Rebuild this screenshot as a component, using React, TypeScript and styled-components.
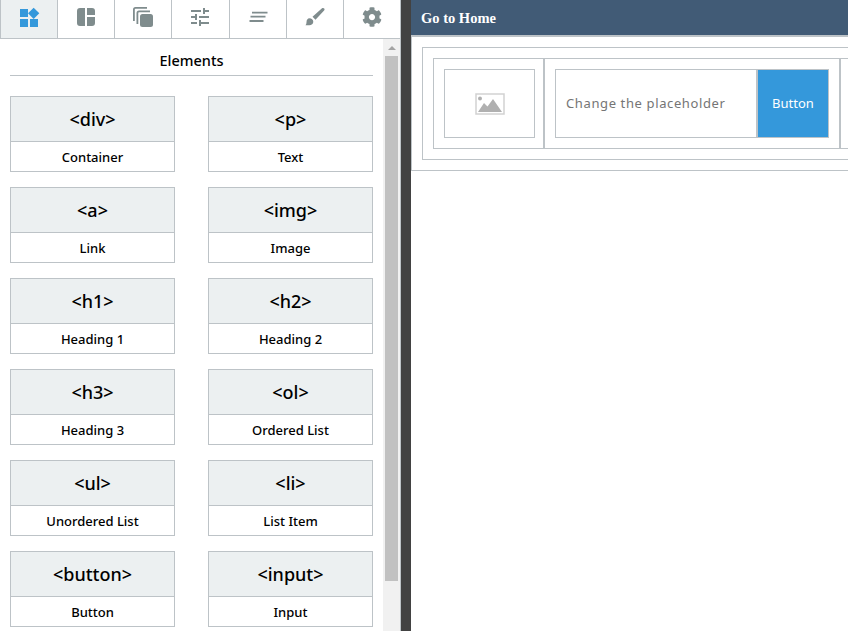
import React from "react";
import styled, { createGlobalStyle } from "styled-components";
import { FaCog } from "react-icons/fa";
import { MdTune, MdWidgets } from "react-icons/md";

const elements = [
  { tag: "<div>", label: "Container" },
  { tag: "<p>", label: "Text" },
  { tag: "<a>", label: "Link" },
  { tag: "<img>", label: "Image" },
  { tag: "<h1>", label: "Heading 1" },
  { tag: "<h2>", label: "Heading 2" },
  { tag: "<h3>", label: "Heading 3" },
  { tag: "<ol>", label: "Ordered List" },
  { tag: "<ul>", label: "Unordered List" },
  { tag: "<li>", label: "List Item" },
  { tag: "<button>", label: "Button" },
  { tag: "<input>", label: "Input" },
];

const WidgetsIcon = styled(MdWidgets)`
  transform: translateY(1px);
`;

const LayoutIcon = () => (
  <svg width="24" height="24" viewBox="0 0 24 24" fill="currentColor">
    <path d="M11 3v18H6a3 3 0 0 1-3-3V6a3 3 0 0 1 3-3h5zM13 3h5a3 3 0 0 1 3 3v4h-8V3zM13 12h8v6a3 3 0 0 1-3 3h-5v-9z" />
  </svg>
);

const LayersIcon = () => (
  <svg width="24" height="24" viewBox="0 0 24 24" fill="currentColor">
    <path d="M2 4.500A2.500 2.500 0 0 1 4.500 2H16v1.800H4.500a.7.7 0 0 0-.7.7V16H2V4.500z" />
    <path d="M5.500 8A2.500 2.500 0 0 1 8 5.500h11v1.800H8a.7.7 0 0 0-.7.7v11H5.500V8z" />
    <rect x="9" y="9" width="13" height="13" rx="2.500" />
  </svg>
);

const LinesIcon = () => (
  <svg width="24" height="24" viewBox="0 0 24 24" fill="currentColor">
    <path d="M6 6.800h15.500v1.800H6zM4.500 10.800h15v1.800h-15zM3.500 15.100h14v1.800h-14z" />
  </svg>
);

const BrushIcon = () => (
  <svg width="24" height="24" viewBox="0 0 24 24" fill="currentColor">
    <path d="M9.500 11.800L19 3.300c.7-.6 1.700-.5 2.200.1.500.6.500 1.500-.1 2.100l-8.600 9.300-3-3z" />
    <path d="M6.500 13.300c2 0 3.800 1.500 3.800 3.400 0 2-1.800 3.500-4 3.500H2.500c.7-.7 1-1.700 1-3 0-2.200 1-3.900 3-3.900z" />
  </svg>
);

const tabs = [
  <WidgetsIcon size={24} />,
  <LayoutIcon />,
  <LayersIcon />,
  <MdTune size={24} />,
  <LinesIcon />,
  <BrushIcon />,
  <FaCog size={20} />,
];

const GlobalStyle = createGlobalStyle`
  html, body {
    margin: 0;
    height: 100%;
    overflow: hidden;
    background: #fff;
  }
  * {
    box-sizing: border-box;
  }
  #root {
    height: 100%;
  }
`;

const Page = styled.div`
  display: flex;
  width: 848px;
  height: 631px;
  overflow: hidden;
  font-family: "Noto Sans", "Open Sans", sans-serif;
`;

const Sidebar = styled.aside`
  display: flex;
  flex-direction: column;
  flex: none;
  width: 401px;
  height: 100%;
`;

const Tabs = styled.nav`
  display: flex;
  flex: none;
  height: 39px;
  border-bottom: 1px solid #bdc3c7;
`;

const Tab = styled.div<{ $active?: boolean }>`
  display: flex;
  flex: 1;
  align-items: center;
  justify-content: center;
  padding-bottom: 4px;
  border-left: ${(p) => (p.$active ? "1px solid #bdc3c7" : "none")};
  border-right: 1px solid #bdc3c7;
  background: ${(p) => (p.$active ? "#ecf0f1" : "#fff")};
  color: ${(p) => (p.$active ? "#3498db" : "#7f8c8d")};
`;

const SidebarBody = styled.div`
  display: flex;
  flex: 1;
  min-height: 0;
  border-right: 1px solid #bdc3c7;
`;

const Elements = styled.div`
  flex: 1;
  padding: 10px 10px 0;
  overflow: hidden;
`;

const Title = styled.h2`
  margin: 0 0 20px;
  height: 27px;
  border-bottom: 1px solid #bdc3c7;
  font-size: 14.500px;
  font-weight: 500;
  line-height: 23px;
  text-align: center;
  color: #000;
`;

const Grid = styled.div`
  display: grid;
  grid-template-columns: 165px 165px;
  justify-content: space-between;
  row-gap: 15px;
`;

const Card = styled.div`
  display: flex;
  flex-direction: column;
  height: 76px;
  border: 1px solid #bdc3c7;
`;

const Tag = styled.div`
  display: flex;
  flex: 1;
  align-items: center;
  justify-content: center;
  border-bottom: 1px solid #bdc3c7;
  background: #ecf0f1;
  font-size: 18px;
  font-weight: 500;
  color: #000;
`;

const Label = styled.div`
  display: flex;
  flex: none;
  align-items: center;
  justify-content: center;
  height: 29px;
  font-size: 13px;
  font-weight: 500;
  color: #000;
`;

const ScrollTrack = styled.div`
  display: flex;
  flex-direction: column;
  align-items: center;
  flex: none;
  width: 17px;
  background: #f1f1f1;
`;

const ScrollArrow = styled.div`
  flex: none;
  width: 0;
  height: 0;
  margin: 7px 0 6px;
  border-left: 4px solid transparent;
  border-right: 4px solid transparent;
  border-bottom: 4px solid #a3a3a3;
`;

const ScrollThumb = styled.div`
  flex: none;
  width: 13px;
  height: 525px;
  background: #c1c1c1;
`;

const Divider = styled.div`
  flex: none;
  width: 10px;
  height: 100%;
  background: #424242;
`;

const Main = styled.main`
  flex: 1;
  min-width: 0;
  display: flex;
  flex-direction: column;
`;

const TopBar = styled.header`
  flex: none;
  height: 37px;
  padding-left: 10px;
  border-bottom: 2px solid #bdc3c7;
  background: #415b76;
  font-family: "Liberation Serif", serif;
  font-size: 14.500px;
  font-weight: 700;
  line-height: 36px;
  color: #fff;
`;

const Canvas = styled.div`
  width: 500px;
  padding: 10px;
  border-left: 1px solid #bdc3c7;
  border-bottom: 1px solid #bdc3c7;
`;

const Section = styled.div`
  padding: 10px;
  border: 1px solid #bdc3c7;
`;

const Row = styled.div`
  display: flex;
  height: 91px;
  border: 1px solid #bdc3c7;
`;

const Column = styled.div<{ $width: number; $paddingRight: number }>`
  display: flex;
  flex: none;
  width: ${(p) => p.$width}px;
  padding: 10px ${(p) => p.$paddingRight}px 10px 10px;
  border-right: 2px solid #bdc3c7;
`;

const ImageBox = styled.div`
  display: flex;
  flex: 1;
  align-items: center;
  justify-content: center;
  border: 1px solid #bdc3c7;
`;

const Input = styled.div`
  display: flex;
  flex: 1;
  align-items: center;
  padding: 0 0 1px 10px;
  border: 1px solid #bdc3c7;
  border-right-width: 2px;
  font-size: 13px;
  letter-spacing: 0.620px;
  color: #757575;
`;

const Button = styled.div`
  display: flex;
  flex: none;
  width: 71px;
  align-items: center;
  justify-content: center;
  padding-bottom: 1px;
  border: 1px solid #bdc3c7;
  border-left: none;
  background: #3498db;
  font-size: 13px;
  color: #fff;
`;

const App = () => (
  <>
    <GlobalStyle />
    <Page>
      <Sidebar>
        <Tabs>
          {tabs.map((icon, i) => (
            <Tab key={i} $active={i === 0}>
              {icon}
            </Tab>
          ))}
        </Tabs>
        <SidebarBody>
          <Elements>
            <Title>Elements</Title>
            <Grid>
              {elements.map((el) => (
                <Card key={el.tag}>
                  <Tag>{el.tag}</Tag>
                  <Label>{el.label}</Label>
                </Card>
              ))}
            </Grid>
          </Elements>
          <ScrollTrack>
            <ScrollArrow />
            <ScrollThumb />
          </ScrollTrack>
        </SidebarBody>
      </Sidebar>
      <Divider />
      <Main>
        <TopBar>Go to Home</TopBar>
        <Canvas>
          <Section>
            <Row>
              <Column $width={111} $paddingRight={8}>
                <ImageBox>
                  <svg width="30" height="22" viewBox="0 0 30 22">
                    <rect x="1" y="1" width="28" height="20" fill="#fff" stroke="#d2d2d2" strokeWidth="1.500" />
                    <circle cx="5" cy="5.500" r="2" fill="#b0b0b0" />
                    <path d="M3 19l6-9 3.500 3.500L18 6l9 13z" fill="#b0b0b0" />
                  </svg>
                </ImageBox>
              </Column>
              <Column $width={296} $paddingRight={10}>
                <Input>Change the placeholder</Input>
                <Button>Button</Button>
              </Column>
            </Row>
          </Section>
        </Canvas>
      </Main>
    </Page>
  </>
);

export default App;
